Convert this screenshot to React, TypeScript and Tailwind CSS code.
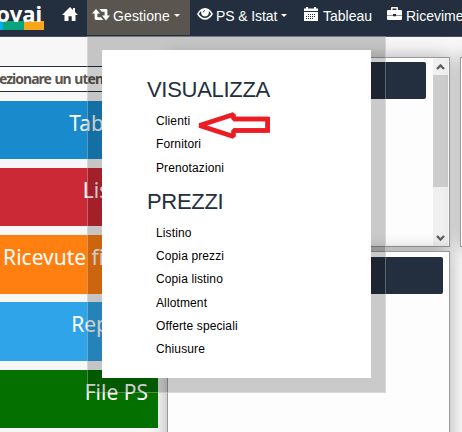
import React from "react";

const arial = "font-['Liberation_Sans',Arial,sans-serif]";
const noto = "font-['Noto_Sans',sans-serif]";

function HomeIcon() {
  return (
    <svg className="mt-[7px] h-[14px] w-4 shrink-0" viewBox="0 0 16 14" fill="white">
      <path d="M8 0 L11 3 V1 H13 V5 L16 8 H13.5 V14 H9.7 V9.3 H6.5 V14 H2.5 V8 H0Z" />
    </svg>
  );
}

function RetweetIcon() {
  return (
    <svg className="mt-[9px] h-3 w-[18px] shrink-0" viewBox="0 0 18 12" fill="white">
      <path d="M4 0 L8 4.6 H5.4 V8.2 H9 L11.4 11 H4 Q2.6 11 2.6 9.6 V4.6 H0Z" />
      <path d="M7.4 0 H14 Q15.4 0 15.4 1.4 V6.6 H18 L14 11.4 L10 6.6 H12.6 V2.8 H9.8Z" />
    </svg>
  );
}

function EyeIcon() {
  return (
    <svg className="mt-2 h-3 w-4 shrink-0" viewBox="0 0 16 12">
      <path fill="white" fillRule="evenodd" d="M0 6 Q3.2 0 8 0 T16 6 Q12.6 11.8 8 11.8 T0 6ZM1.8 6 Q4.6 10 8 10 T14.2 6 Q13 4 11.8 3 Q12.5 8.4 8 8.4 T4.2 3 Q2.8 4.2 1.8 6Z" />
      <path d="M6.2 4.4 Q6.3 2.8 8 2.6" fill="none" stroke="#232f3e" strokeWidth="0.9" />
    </svg>
  );
}

function CalendarIcon() {
  return (
    <svg className="mt-[7px] h-[14px] w-[14px] shrink-0" viewBox="0 0 14 14">
      <path fill="white" d="M0 1.5 H2 V0 H4 V1.5 H10 V0 H12 V1.5 H14 V4 H0ZM0 5 H14 V14 H0Z" />
      <path stroke="#232f3e" strokeWidth="1" strokeDasharray="1 1" d="M4 7.5 H12M2 9.5 H12M2 11.5 H10" />
    </svg>
  );
}

function BriefcaseIcon() {
  return (
    <svg className="mt-[7px] h-[13px] w-[15px] shrink-0" viewBox="0 0 15 13" fill="white">
      <path fillRule="evenodd" d="M4 3 V1 Q4 0 5 0 H10 Q11 0 11 1 V3 H14 Q15 3 15 4 V8 H9 V7 H6 V8 H0 V4 Q0 3 1 3ZM5.5 1.5 V3 H9.5 V1.5Z" />
      <path d="M0 8.5 H6 V9.3 H9 V8.5 H15 V12 Q15 13 14 13 H1 Q0 13 0 12Z" />
    </svg>
  );
}

function Caret() {
  return <span className="mt-[14px] h-0 w-0 border-x-[3px] border-t-[3px] border-x-transparent border-t-white" />;
}

const label = "whitespace-nowrap text-[14px] leading-8";

function Navbar() {
  return (
    <nav className={`flex h-[37px] w-[600px] border-b border-[#435264] bg-[#232f3e] text-white ${arial}`}>
      <div className="relative h-[36px] w-[62px] shrink-0">
        <div className="flex h-[30px] w-11 items-end">
          <span className="h-[9px] w-[3px] bg-[#00adef]" />
          <span className="h-[9px] w-[21px] bg-[#08a47e]" />
          <span className="h-[9px] w-5 bg-[#faa61a]" />
        </div>
        <span className={`absolute right-[20px] top-[-3px] text-[22px] font-bold leading-[32px] ${noto}`}>ovai</span>
      </div>
      <div className="flex w-[25px] shrink-0"><HomeIcon /></div>
      <div className="flex h-[35px] w-[103px] shrink-0 bg-[#5a554f] pl-[5px]">
        <RetweetIcon />
        <span className={`${label} ml-[3px] w-[61px] tracking-[0.1px]`}>Gestione</span>
        <Caret />
      </div>
      <div className="flex w-[114px] shrink-0 pl-[7px]">
        <EyeIcon />
        <span className={`${label} ml-[3px] w-[65px] tracking-[-0.1px]`}>PS &amp; Istat</span>
        <Caret />
      </div>
      <div className="flex w-[83px] shrink-0">
        <CalendarIcon />
        <span className={`${label} ml-[5px]`}>Tableau</span>
      </div>
      <div className="flex shrink-0">
        <BriefcaseIcon />
        <span className={`${label} ml-[4px]`}>Ricevimento</span>
      </div>
    </nav>
  );
}

const tiles = [
  { text: "Tableau", style: "h-[58px] mb-[9px] pr-[12px] bg-[#198bcd]" },
  { text: "Listino", style: "h-[58px] mb-[9px] pr-[10px] bg-[#cc2936]" },
  { text: "Ricevute fiscali", style: "h-[59px] mb-2 pr-[11px] bg-[#ff7f11]" },
  { text: "Reports", style: "h-[59px] mb-[9px] pr-[10px] bg-[#30a4e8]" },
  { text: "File PS", style: "h-[58px] pr-[10px] bg-[#047000]" },
];

function Sidebar() {
  return (
    <aside className={`relative z-10 w-[158px] shrink-0 pt-[29px] ${noto}`}>
      <div className="mb-[9px] h-[26px] overflow-hidden whitespace-nowrap border-y border-[#232f3e] bg-white text-[14px] font-bold leading-[23px] tracking-[-1px] [word-spacing:1px] text-[#58544f]">
        <span className="-ml-px">ezionare un utente</span>
      </div>
      {tiles.map((tile) => (
        <div key={tile.text} className={`${tile.style} flex justify-end overflow-hidden whitespace-nowrap text-[21px] leading-[44px] text-white`}>
          {tile.text}
        </div>
      ))}
    </aside>
  );
}

const panel = "border border-[#999] bg-[#fdfdfd] shadow-[0_0_16px_rgba(0,0,0,0.3)]";

function Scrollbar() {
  return (
    <div className="flex w-[15px] flex-col items-center bg-[#f0f0f0]">
      <svg className="h-[17px] w-[15px]" viewBox="0 0 15 17" fill="none" stroke="#606060" strokeWidth="2.4"><path d="M4 11 L7.5 7.5 L11 11" /></svg>
      <div className="h-[112px] w-[15px] bg-[#cdcdcd]" />
      <svg className="mt-[42px] h-[17px] w-[15px]" viewBox="0 0 15 17" fill="none" stroke="#606060" strokeWidth="2.4"><path d="M4 7 L7.5 10.5 L11 7" /></svg>
    </div>
  );
}

function Dashboard() {
  return (
    <main className="ml-[9px] flex gap-[10px] pt-5">
      <div className="flex w-[283px] shrink-0 flex-col gap-[4px]">
        <section className={`${panel} flex h-[190px]`}>
          <div className="mt-1 ml-[6px] mr-[7px] h-[37px] flex-1 rounded-[2px] bg-[#232f3e]" />
          <Scrollbar />
          <div className="w-px" />
        </section>
        <section className={`${panel} h-[300px] px-[6px] pt-[5px]`}>
          <div className="h-[37px] rounded-[2px] bg-[#232f3e]" />
        </section>
      </div>
      <section className={`${panel} h-[190px] w-[280px] shrink-0`} />
    </main>
  );
}

function MenuGroup({ title, children }: { title: string; children: React.ReactNode }) {
  return (
    <section>
      <h2 className="text-[22px] leading-[26px] tracking-[-0.3px] text-[#232f3e]">{title}</h2>
      <ul className="pl-[9px] pt-[7px] text-[12px] leading-[23.3px] tracking-[0.12px] text-black">{children}</ul>
    </section>
  );
}

function GestioneMenu() {
  return (
    <div className={`absolute left-[87px] top-[36px] z-20 h-[357px] w-[299px] border border-white/30 bg-black/20 bg-clip-border px-[14px] pt-[13px] ${arial}`}>
      <div className="h-[328px] w-[269px] bg-white pl-[45px] pt-[27px]">
        <MenuGroup title="VISUALIZZA">
          <li>Clienti</li><li>Fornitori</li><li>Prenotazioni</li>
        </MenuGroup>
        <div className="h-[8.8px]" />
        <MenuGroup title="PREZZI">
          <li>Listino</li><li>Copia prezzi</li><li>Copia listino</li><li>Allotment</li><li>Offerte speciali</li><li>Chiusure</li>
        </MenuGroup>
      </div>
      <svg className="absolute left-[109px] top-[73px] h-[30px] w-[76px]" viewBox="0 0 76 30" fill="white" stroke="#ed1c24" strokeWidth="4.6">
        <path strokeLinejoin="bevel" d="M2.5 15.5 L36.5 4.5 V9 H70.7 V20.5 H36.5 V26.5Z" />
        <path fill="none" d="M36.5 9 H70.7 V20.5 H36.5" />
      </svg>
    </div>
  );
}

export default function App() {
  return (
    <div className="relative h-[432px] w-[462px] overflow-hidden bg-[#f7f7f7]">
      <Navbar />
      <div className="flex">
        <Sidebar />
        <Dashboard />
      </div>
      <GestioneMenu />
    </div>
  );
}
